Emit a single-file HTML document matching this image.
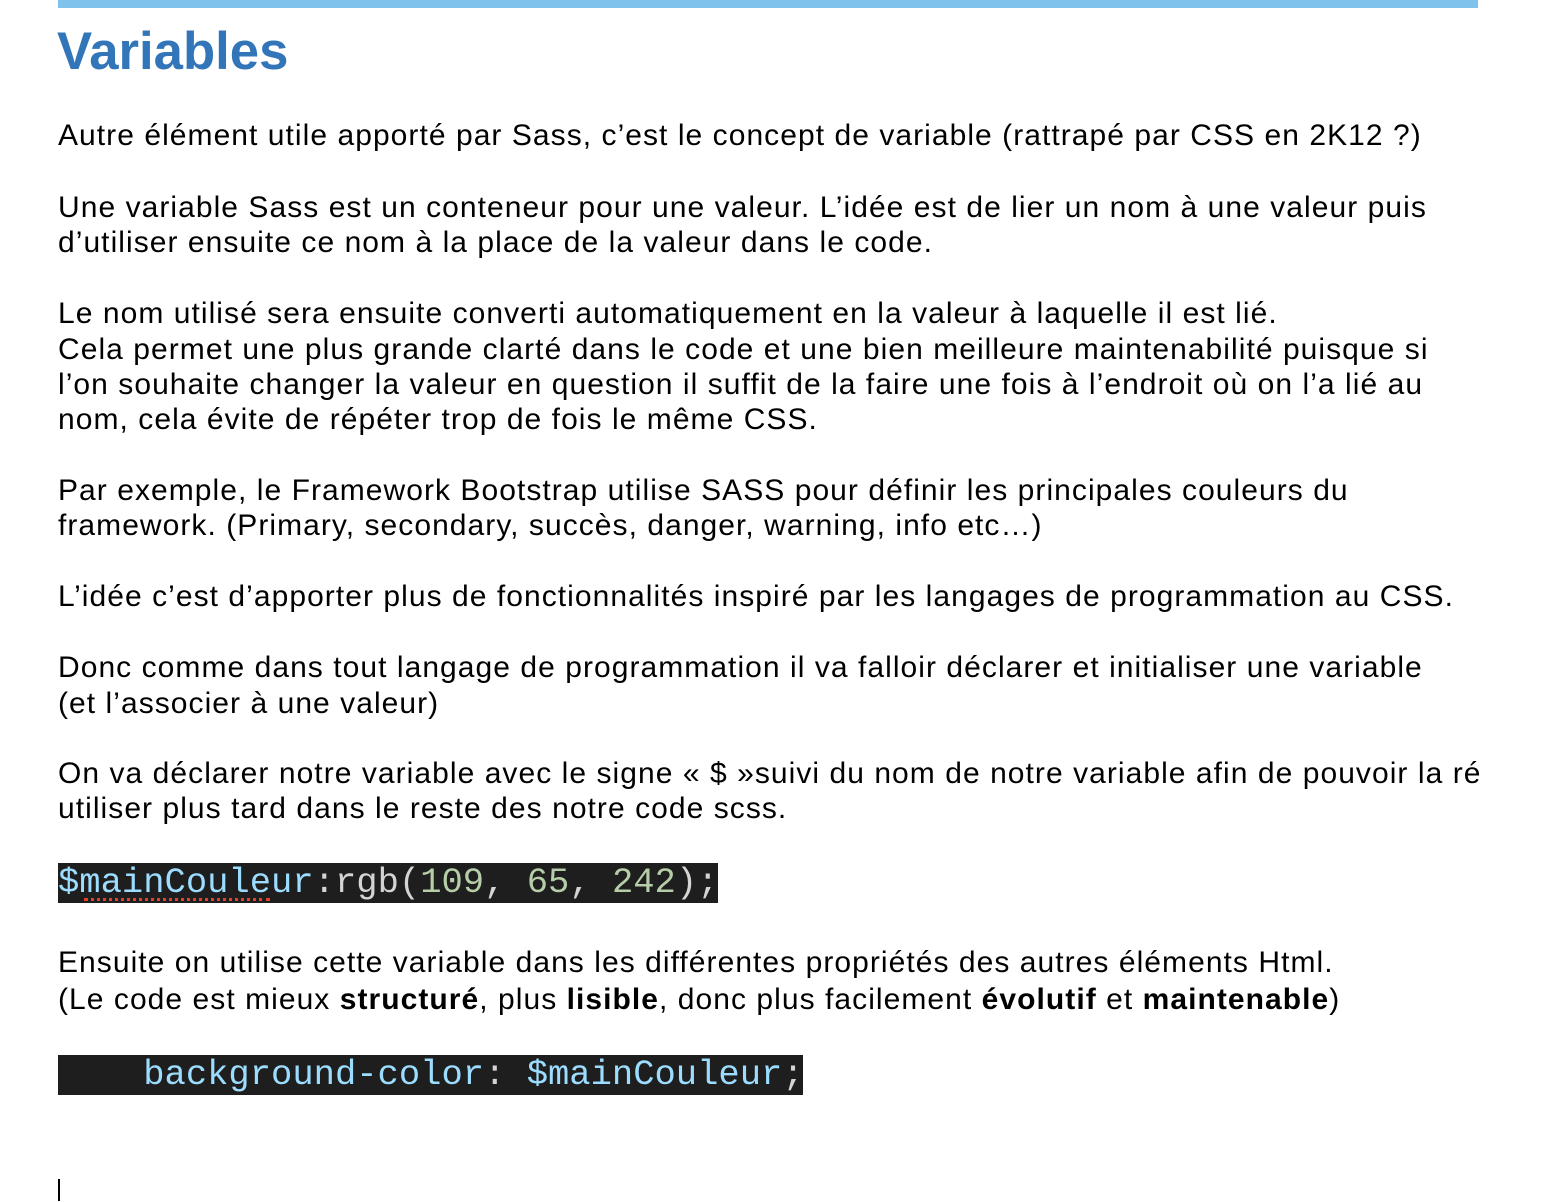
<!DOCTYPE html>
<html><head><meta charset="utf-8"><style>
html,body{margin:0;padding:0;background:#fff;width:1566px;height:1202px;overflow:hidden;position:relative}
.l{position:absolute;left:58px;font:30px/35px "Liberation Sans",Arial,sans-serif;letter-spacing:1.05px;color:#000;white-space:nowrap}
.code{position:absolute;left:58px;background:#1e1e1e;height:40px;font:35.5px/40px "Liberation Mono","DejaVu Sans Mono",monospace;white-space:pre;color:#d4d4d4}
.v{color:#9cdcfe}.n{color:#b5cea8}
</style></head><body>
<div style="position:absolute;left:58px;top:0;width:1420px;height:8px;background:#7fc3ec"></div>
<div style="position:absolute;left:57px;top:22px;font:bold 52.7px/60px 'Liberation Sans',Arial,sans-serif;color:#3375b9">Variables</div>
<div class="l" style="top:118px">Autre élément utile apporté par Sass, c’est le concept de variable (rattrapé par CSS en 2K12 ?)</div>
<div class="l" style="top:190px">Une variable Sass est un conteneur pour une valeur. L’idée est de lier un nom à une valeur puis</div>
<div class="l" style="top:225px">d’utiliser ensuite ce nom à la place de la valeur dans le code.</div>
<div class="l" style="top:296px">Le nom utilisé sera ensuite converti automatiquement en la valeur à laquelle il est lié.</div>
<div class="l" style="top:332px">Cela permet une plus grande clarté dans le code et une bien meilleure maintenabilité puisque si</div>
<div class="l" style="top:367px">l’on souhaite changer la valeur en question il suffit de la faire une fois à l’endroit où on l’a lié au</div>
<div class="l" style="top:402px">nom, cela évite de répéter trop de fois le même CSS.</div>
<div class="l" style="top:473px">Par exemple, le Framework Bootstrap utilise SASS pour définir les principales couleurs du</div>
<div class="l" style="top:508px">framework. (Primary, secondary, succès, danger, warning, info etc…)</div>
<div class="l" style="top:579px">L’idée c’est d’apporter plus de fonctionnalités inspiré par les langages de programmation au CSS.</div>
<div class="l" style="top:650px">Donc comme dans tout langage de programmation il va falloir déclarer et initialiser une variable</div>
<div class="l" style="top:686px">(et l’associer à une valeur)</div>
<div class="l" style="top:756px">On va déclarer notre variable avec le signe « $ »suivi du nom de notre variable afin de pouvoir la ré</div>
<div class="l" style="top:791px">utiliser plus tard dans le reste des notre code scss.</div>
<div class="code" style="top:863px;width:660px"><span class="v">$mainCouleur</span>:rgb(<span class="n">109</span>, <span class="n">65</span>, <span class="n">242</span>);</div>
<div style="position:absolute;left:84px;top:898px;width:186px;height:0;border-top:3px dotted #e8402f"></div>
<div class="l" style="top:945px">Ensuite on utilise cette variable dans les différentes propriétés des autres éléments Html.</div>
<div class="l" style="top:982px">(Le code est mieux <b>structuré</b>, plus <b>lisible</b>, donc plus facilement <b>évolutif</b> et <b>maintenable</b>)</div>
<div class="code" style="top:1055px;width:745px"><span class="v">    background-color</span>: <span class="v">$mainCouleur</span>;</div>
<div style="position:absolute;left:58px;top:1179px;width:2px;height:22px;background:#000"></div>
</body></html>
